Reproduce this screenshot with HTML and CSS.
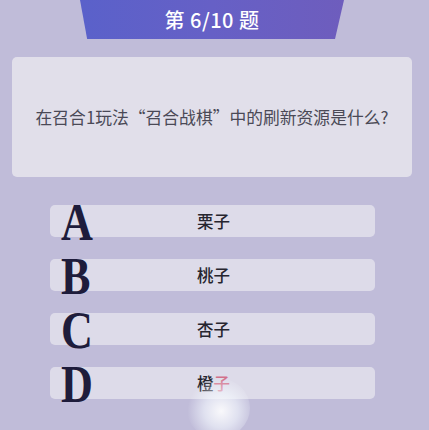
FILE: index.html
```html
<!DOCTYPE html>
<html lang="zh">
<head>
<meta charset="utf-8">
<link rel="stylesheet" href="styles.css">
</head>
<body>
<div class="page">
  <div class="banner"><span class="banner-text">第 6/10 题</span></div>
  <div class="question">在召合1玩法“召合战棋”中的刷新资源是什么?</div>
  <div class="options">
    <div class="option"><span class="letter">A</span><span class="answer">栗子</span></div>
    <div class="option"><span class="letter">B</span><span class="answer">桃子</span></div>
    <div class="option"><span class="letter">C</span><span class="answer">杏子</span></div>
    <div class="option"><span class="letter">D</span><span class="answer">橙<span class="tint">子</span></span></div>
  </div>
  <div class="glow"></div>
</div>
</body>
</html>
```
FILE: styles.css
```css
html, body {
  margin: 0;
  padding: 0;
}
body {
  background: #c0bcd9;
  font-family: "Noto Sans CJK SC", "Noto Sans", sans-serif;
  width: 429px;
  height: 430px;
  overflow: hidden;
}
.page {
  position: relative;
  width: 429px;
  height: 430px;
  display: flex;
  flex-direction: column;
}
.banner {
  margin-left: 80px;
  width: 264px;
  height: 39px;
  background: linear-gradient(90deg, #5a61ca 0%, #6660c6 50%, #6e5dbd 100%);
  clip-path: polygon(0 0, 100% 0, 96.6% 100%, 2.7% 100%);
  display: flex;
  align-items: center;
  justify-content: center;
}
.banner-text {
  color: #ffffff;
  font-size: 20px;
  font-weight: 500;
  letter-spacing: 0.5px;
  margin-top: -1px;
}
.question {
  margin: 18px 17px 0 12px;
  height: 120px;
  background: #e1dfea;
  border-radius: 5px;
  display: flex;
  align-items: center;
  justify-content: center;
  color: #4a4956;
  font-size: 16.8px;
}
.options {
  margin: 28px 0 0 50px;
  width: 325px;
  display: flex;
  flex-direction: column;
  gap: 22px;
}
.option {
  position: relative;
  height: 32px;
  background: #dddbe9;
  border-radius: 5px;
  display: flex;
  align-items: center;
  justify-content: center;
}
.letter {
  position: absolute;
  left: 11px;
  top: -8px;
  font-family: "Liberation Serif", serif;
  font-weight: bold;
  font-size: 52px;
  line-height: 52px;
  color: #1e1c3b;
  transform: scaleX(0.85);
  transform-origin: left top;
}
.answer {
  color: #26252f;
  font-size: 16.5px;
  font-weight: 500;
  margin-left: 2px;
}
.tint {
  color: #d2708a;
}
.glow {
  position: absolute;
  left: 186px;
  top: 378px;
  width: 64px;
  height: 60px;
  border-radius: 50%;
  background: radial-gradient(circle at 55% 55%, rgba(255,255,255,0.9) 0%, rgba(245,250,255,0.6) 35%, rgba(230,235,250,0) 70%);
}
```
